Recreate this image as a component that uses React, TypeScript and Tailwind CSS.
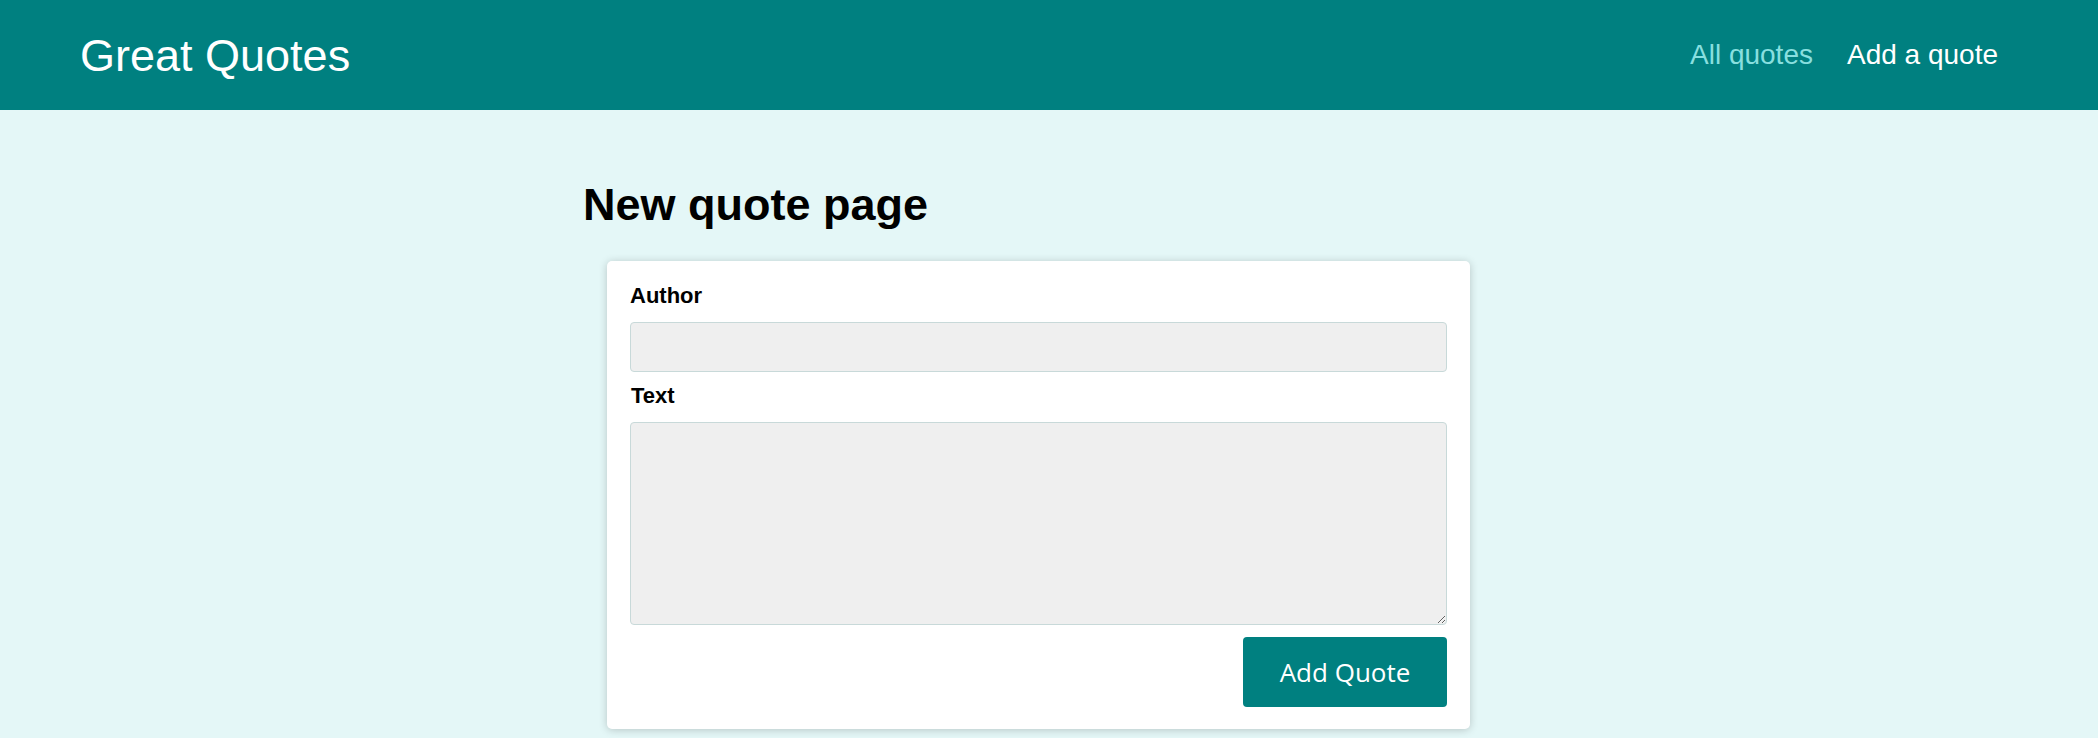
import React from "react";

function Header() {
  return (
    <header className="flex items-center justify-between h-[110px] bg-[#008080] pl-[80px] pr-[100px]">
      <div className="text-[45px] text-white leading-none">Great Quotes</div>
      <nav className="flex items-center gap-[34px] text-[28px] leading-none">
        <a className="text-[#88dfdf]">All quotes</a>
        <a className="text-white">Add a quote</a>
      </nav>
    </header>
  );
}

function QuoteForm() {
  return (
    <form className="ml-[24px] w-[863px] bg-white rounded-[5px] shadow-[0_1px_8px_rgba(0,0,0,0.2)] px-[23px] pt-[22px] pb-[22px]">
      <label className="block text-[22px] font-bold text-black leading-[25px] mb-[14px]">Author</label>
      <input
        type="text"
        className="block w-full h-[50px] bg-[#efefef] border border-[#c8d9d9] rounded-[4px]"
      />
      <label className="block text-[22px] font-bold text-black leading-[25px] mt-[11px] mb-[14px] pl-[1px]">
        Text
      </label>
      <textarea className="block w-full h-[203px] bg-[#efefef] border border-[#c8d9d9] rounded-[4px] resize" />
      <div className="flex justify-end mt-[12px]">
        <button
          type="button"
          className="w-[204px] h-[70px] bg-[#008080] text-white rounded-[4px] text-[26px] font-['Open_Sans',sans-serif]"
        >
          Add Quote
        </button>
      </div>
    </form>
  );
}

export default function App() {
  return (
    <div className="min-h-[738px] bg-[#e4f7f7] font-['Liberation_Sans',Arial,sans-serif]">
      <Header />
      <main className="mx-auto w-[932px] pt-[72px]">
        <h1 className="text-[45px] font-bold text-black leading-none mb-[34px]">New quote page</h1>
        <QuoteForm />
      </main>
    </div>
  );
}
